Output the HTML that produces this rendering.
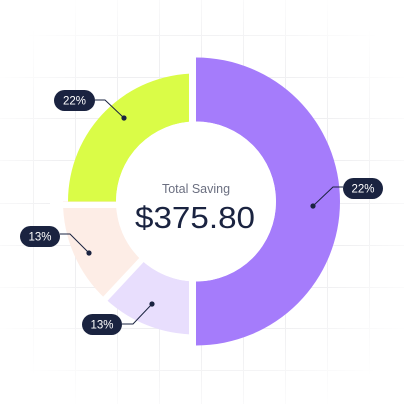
<!DOCTYPE html>
<html><head><meta charset="utf-8"><style>
html,body{margin:0;padding:0;background:#fff;}
body{width:404px;height:404px;overflow:hidden;position:relative;font-family:"Liberation Sans",sans-serif;}
</style></head><body>
<svg width="404" height="404" viewBox="0 0 404 404" xmlns="http://www.w3.org/2000/svg" style="position:absolute;left:0;top:0">
<defs>
<radialGradient id="fade" cx="50%" cy="50%" r="60%">
<stop offset="0.6" stop-color="#fff" stop-opacity="0"/>
<stop offset="1" stop-color="#fff" stop-opacity="1"/>
</radialGradient>
</defs>
<g stroke="#efeff1" stroke-width="1">
<line x1="33.5" y1="0" x2="33.5" y2="404"/><line x1="75.5" y1="0" x2="75.5" y2="404"/><line x1="117.5" y1="0" x2="117.5" y2="404"/><line x1="159.5" y1="0" x2="159.5" y2="404"/><line x1="201.5" y1="0" x2="201.5" y2="404"/><line x1="243.5" y1="0" x2="243.5" y2="404"/><line x1="285.5" y1="0" x2="285.5" y2="404"/><line x1="327.5" y1="0" x2="327.5" y2="404"/><line x1="369.5" y1="0" x2="369.5" y2="404"/>
<line y1="35.5" x1="0" y2="35.5" x2="404"/><line y1="77.5" x1="0" y2="77.5" x2="404"/><line y1="118.5" x1="0" y2="118.5" x2="404"/><line y1="160.5" x1="0" y2="160.5" x2="404"/><line y1="203.5" x1="0" y2="203.5" x2="404"/><line y1="245.5" x1="0" y2="245.5" x2="404"/><line y1="287.5" x1="0" y2="287.5" x2="404"/><line y1="328.5" x1="0" y2="328.5" x2="404"/><line y1="370.5" x1="0" y2="370.5" x2="404"/>
</g>
<rect width="404" height="404" fill="url(#fade)"/>
<g id="chart"></g>
<g stroke="#1a2340" stroke-width="1" fill="none">
<polyline points="95,100 105,100 124,118"/>
<polyline points="313,206 333,187 343,187"/>
<polyline points="60,234 70,234 89,253"/>
<polyline points="122,324 133,324 152,304"/>
</g>
<g fill="#1a2340">
<circle cx="124" cy="118" r="2.6"/><circle cx="313" cy="206" r="2.6"/><circle cx="89" cy="253" r="2.6"/><circle cx="152" cy="304" r="2.6"/>
<rect x="54" y="90" width="41" height="21" rx="10.5"/>
<rect x="343" y="178" width="40" height="21" rx="10.5"/>
<rect x="20" y="226" width="40" height="21" rx="10.5"/>
<rect x="82" y="314" width="40" height="21" rx="10.5"/>
</g>
<g fill="#fff" font-size="11.5" text-anchor="middle" font-family="Liberation Sans, sans-serif">
<text x="74.5" y="104.5">22%</text><text x="363" y="192.5">22%</text><text x="40" y="240.5">13%</text><text x="102" y="328.5">13%</text>
</g>
<text x="196" y="193" text-anchor="middle" font-size="12.5" fill="#6b6f80" font-family="Liberation Sans, sans-serif">Total Saving</text>
<text x="195" y="228" text-anchor="middle" font-size="31" fill="#1a2340" font-family="Liberation Sans, sans-serif" textLength="120" lengthAdjust="spacingAndGlyphs">$375.80</text>
</svg>
<script>
(function(){
var cx=196,cy=201.5,ri=80;
function P(a,r){a=a*Math.PI/180;return (cx+r*Math.cos(a)).toFixed(2)+","+(cy+r*Math.sin(a)).toFixed(2);}
function sec(a0,a1,ro,col){
 var large=(a1-a0)>180?1:0;
 var d="M"+P(a0,ri)+" L"+P(a0,ro)+" A"+ro+","+ro+" 0 "+large+" 1 "+P(a1,ro)+" L"+P(a1,ri)+" A"+ri+","+ri+" 0 "+large+" 0 "+P(a0,ri)+"Z";
 return '<path d="'+d+'" fill="'+col+'"/>';
}
var s="";
s+=sec(180,270,128,"#dafc47");
s+=sec(133,180,133,"#fdede6");
s+=sec(90,133,133,"#e8defd");
s+='<rect x="189" y="40" width="7" height="320" fill="#fff"/>';
s+='<rect x="50" y="202" width="80" height="6" fill="#fff"/>';
var a=133*Math.PI/180;
s+='<line x1="'+(cx+70*Math.cos(a))+'" y1="'+(cy+70*Math.sin(a))+'" x2="'+(cx+150*Math.cos(a))+'" y2="'+(cy+150*Math.sin(a))+'" stroke="#fff" stroke-width="6"/>';
s+=sec(-90,90,144,"#a57cfb");
s+='<circle cx="'+cx+'" cy="'+cy+'" r="'+ri+'" fill="#fff"/>';
document.getElementById("chart").innerHTML=s;
})();
</script>
</body></html>
